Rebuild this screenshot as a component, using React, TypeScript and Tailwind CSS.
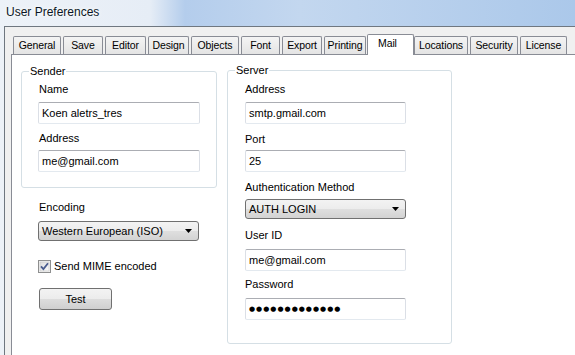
import React from 'react';

// ── Tab headers (widths measured from the dialog) ──
const tabs = [
  { label: "General", w: "w-[48px]" },
  { label: "Save", w: "w-[40px]" },
  { label: "Editor", w: "w-[41px]" },
  { label: "Design", w: "w-[41px]" },
  { label: "Objects", w: "w-[48px]" },
  { label: "Font", w: "w-[39px]" },
  { label: "Export", w: "w-[40px]" },
  { label: "Printing", w: "w-[42px]" },
  { label: "Mail", w: "w-[47px]", active: true },
  { label: "Locations", w: "w-[54px]" },
  { label: "Security", w: "w-[48px]" },
  { label: "License", w: "w-[47px]" },
];

function Label({ children, className = "" }: { children: React.ReactNode; className?: string }) {
  return <div className={`h-[13px] leading-[13px] whitespace-nowrap ${className}`}>{children}</div>;
}

function TextBox({ value, className = "" }: { value: React.ReactNode; className?: string }) {
  return (
    <div
      className={`h-[22px] flex items-center pl-[3px] bg-white rounded-[2px] border border-[#dbdfe6] border-t-[#abadb3] border-b-[#e3e9ef] ${className}`}
    >
      {value}
    </div>
  );
}

function ComboBox({ value, className = "" }: { value: string; className?: string }) {
  return (
    <div
      className={`h-[20px] flex items-center justify-between pl-[3px] pr-[6px] rounded-[3px] border border-[#707070] bg-[linear-gradient(#f3f3f3_0%,#ececec_50%,#dfdfdf_50%,#d3d3d3_100%)] ${className}`}
    >
      <span>{value}</span>
      <svg width="7" height="4" viewBox="0 0 7 4">
        <path d="M0 0 L7 0 L3.5 4 Z" fill="#000" />
      </svg>
    </div>
  );
}

export default function App() {
  return (
    <div
      className="w-[575px] h-[355px] overflow-hidden flex flex-col text-[11px] text-black bg-[linear-gradient(90deg,#edf2f8_0px,#e6edf6_150px,#b4cdec_185px,#c3d7ef_300px,#abc8ea_575px)]"
      style={{ fontFamily: "'Liberation Sans', Arial, sans-serif" }}
    >
      {/* ── window title ── */}
      <div className="h-[26px] shrink-0 pl-[6px] pt-[5px] text-[12px] leading-[14px] text-[#0b1626] [text-shadow:0_0_6px_#ffffff,0_0_3px_#ffffff]">
        User Preferences
      </div>

      {/* ── dialog client area ── */}
      <div className="flex-1 ml-[4px] flex flex-col border-l border-t border-[#6f7780] bg-[#f0f0f0] pl-[6px] pt-[7px]">
        {/* tab strip */}
        <div className="relative z-10 flex items-end gap-[2px] pl-[2px] h-[21px] -mb-px text-[10.5px] tracking-[-0.1px]">
          {tabs.map((t) =>
            t.active ? (
              <div
                key={t.label}
                className={`${t.w} h-[21px] -ml-[1px] -mr-[2px] pl-[10px] pt-[2px] leading-[13px] bg-white border border-b-0 border-[#898c95] rounded-t-[2px]`}
              >
                {t.label}
              </div>
            ) : (
              <div
                key={t.label}
                className={`${t.w} h-[18px] mb-px flex items-center justify-center border border-b-0 border-[#898c95] rounded-t-[2px] bg-[linear-gradient(#f4f4f4,#e4e4e4)]`}
              >
                {t.label}
              </div>
            )
          )}
        </div>

        {/* tab page */}
        <div className="flex-1 flex bg-white border-l border-t border-[#898c95] pl-[9px] pt-[10px] gap-[14px]">
          {/* left column */}
          <div className="w-[192px] flex flex-col">
            <fieldset className="border border-[#d5dfe5] rounded-[3px] px-[16px] pb-[15px]">
              <legend className="ml-[-9px] px-[1px] h-[13px] leading-[13px]">Sender</legend>
              <Label className="mt-[5px] pl-px">Name</Label>
              <TextBox value="Koen aletrs_tres" className="mt-[6px] w-[162px]" />
              <Label className="mt-[8px] pl-px">Address</Label>
              <TextBox value="me@gmail.com" className="mt-[5px] w-[162px]" />
            </fieldset>

            <div className="pl-[17px]">
              <Label className="mt-[13px] pl-px">Encoding</Label>
              <ComboBox value="Western European (ISO)" className="mt-[7px] w-[161px]" />

              <div className="mt-[18px] h-[14px] flex items-center gap-[3px]">
                <svg width="13" height="13" viewBox="0 0 13 13">
                  <defs>
                    <linearGradient id="cbg" x1="0" y1="0" x2="1" y2="1">
                      <stop offset="0" stopColor="#dcdcdc" />
                      <stop offset="1" stopColor="#fbfbfb" />
                    </linearGradient>
                  </defs>
                  <rect x="0.5" y="0.5" width="12" height="12" fill="#f4f4f4" stroke="#8e8f8f" />
                  <rect x="2" y="2" width="9" height="9" fill="url(#cbg)" stroke="#c5c5c5" strokeWidth="0.6" />
                  <path d="M3 6.3 L5.4 9 L10 3.2" fill="none" stroke="#4a5c8e" strokeWidth="1.8" />
                </svg>
                <span>Send MIME encoded</span>
              </div>

              <button className="mt-[15px] ml-px w-[73px] h-[22px] flex items-center justify-center rounded-[3px] border border-[#707070] bg-[linear-gradient(#f3f3f3_0%,#ececec_50%,#dddddd_50%,#cfcfcf_100%)]">
                Test
              </button>
            </div>
          </div>

          {/* right column */}
          <div className="w-[225px] -mt-px">
            <fieldset className="border border-[#d5dfe5] rounded-[3px] px-[17px] pb-[23px]">
              <legend className="ml-[-10px] px-[1px] h-[13px] leading-[13px]">Server</legend>
              <Label className="mt-[6px]">Address</Label>
              <TextBox value="smtp.gmail.com" className="mt-[6px] w-[161px]" />
              <Label className="mt-[9px]">Port</Label>
              <TextBox value="25" className="mt-[4px] w-[161px]" />
              <Label className="mt-[9px]">Authentication Method</Label>
              <ComboBox value="AUTH LOGIN" className="mt-[5px] w-[161px]" />
              <Label className="mt-[10px]">User ID</Label>
              <TextBox value="me@gmail.com" className="mt-[7px] w-[161px]" />
              <Label className="mt-[7px]">Password</Label>
              <TextBox
                value={
                  <span
                    className="text-[7px] tracking-[1px]"
                    style={{ fontFamily: "'DejaVu Sans', sans-serif" }}
                  >
                    ●●●●●●●●●●●●●
                  </span>
                }
                className="mt-[7px] w-[161px]"
              />
            </fieldset>
          </div>
        </div>
      </div>
    </div>
  );
}
